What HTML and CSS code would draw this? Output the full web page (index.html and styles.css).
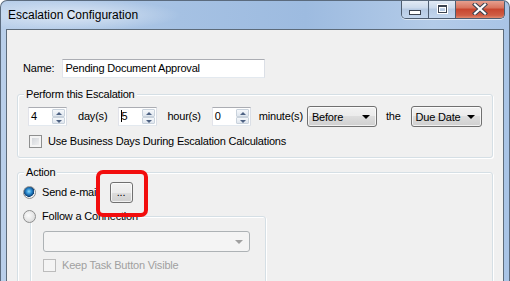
FILE: index.html
```html
<!DOCTYPE html>
<html lang="en">
<head>
    <meta charset="UTF-8">
    <title>Escalation Configuration</title>
    <link rel="stylesheet" href="styles.css">
</head>
<body>

<div class="window">
    <div class="titlebar">
        <span class="title">Escalation Configuration</span>
        <div class="caption-buttons">
            <div class="cap-btn cap-min"><span class="min-glyph"></span></div>
            <div class="cap-btn cap-max"><span class="max-glyph"></span></div>
            <div class="cap-btn cap-close">
                <svg width="16" height="12" viewBox="0 0 16 12">
                    <path d="M3 1.5 L13 10.5 M13 1.5 L3 10.5" stroke="#3b4350" stroke-width="4.2" stroke-linecap="square"/>
                    <path d="M3 1.5 L13 10.5 M13 1.5 L3 10.5" stroke="#ffffff" stroke-width="2.2" stroke-linecap="square"/>
                </svg>
            </div>
        </div>
    </div>

    <div class="client">
        <!-- Name -->
        <div class="name-row">
            <span class="label">Name:</span>
            <div class="textbox name-box">Pending Document Approval</div>
        </div>

        <!-- Timing -->
        <div class="group perform-group">
            <div class="group-title">Perform this Escalation</div>
            <div class="spin-row">
                <div class="spinbox"><span class="spin-value">4</span><div class="spin-buttons"><span class="spin-up"></span><span class="spin-down"></span></div></div>
                <span class="unit unit-day">day(s)</span>
                <div class="spinbox"><span class="spin-value"><span class="caret"></span>5</span><div class="spin-buttons"><span class="spin-up"></span><span class="spin-down"></span></div></div>
                <span class="unit unit-hour">hour(s)</span>
                <div class="spinbox"><span class="spin-value">0</span><div class="spin-buttons"><span class="spin-up"></span><span class="spin-down"></span></div></div>
                <span class="unit unit-minute">minute(s)</span>
                <div class="combo combo-before"><span>Before</span><span class="combo-arrow"></span></div>
                <span class="unit unit-the">the</span>
                <div class="combo combo-due"><span>Due Date</span><span class="combo-arrow"></span></div>
            </div>
            <div class="check-row business-row">
                <span class="checkbox"></span>
                <span class="label">Use Business Days During Escalation Calculations</span>
            </div>
        </div>

        <!-- Action -->
        <div class="group action-group">
            <div class="group-title">Action</div>
            <div class="send-row">
                <span class="radio checked"></span>
                <span class="label">Send e-mail</span>
                <div class="push-btn">...</div>
            </div>
            <div class="sub-group">
                <div class="sub-legend">
                    <span class="radio"></span>
                    <span class="label">Follow a Connection</span>
                </div>
                <div class="combo combo-disabled"><span></span><span class="combo-arrow"></span></div>
                <div class="check-row keep-row">
                    <span class="checkbox disabled"></span>
                    <span class="label disabled-text">Keep Task Button Visible</span>
                </div>
            </div>
        </div>
    </div>

    <div class="highlight"></div>
</div>

</body>
</html>
```

FILE: styles.css
```css
body {
    margin: 0;
    padding: 0;
    background-color: #ffffff;
    font-family: "Liberation Sans", Arial, sans-serif;
    font-size: 11px;
    letter-spacing: -0.2px;
    color: #000;
    overflow: hidden;
}
.window {
    position: relative;
    width: 510px;
    height: 290px;
    box-sizing: border-box;
    border: 1px solid #5b6b7e;
    border-bottom: none;
    border-radius: 7px 7px 0 0;
    background: linear-gradient(to right, #b9cfea 0%, #a5c1e3 35%, #9dbbe0 60%, #b3cbe8 85%, #a9c4e6 100%);
    overflow: hidden;
}
.titlebar {
    height: 28px;
    display: flex;
    justify-content: space-between;
    align-items: flex-start;
    background: radial-gradient(ellipse 110px 16px at 70px 14px, rgba(255, 255, 255, 0.55), rgba(255, 255, 255, 0));
}
.title {
    font-size: 12px;
    letter-spacing: 0;
    line-height: 14px;
    margin: 7px 0 0 7px;
    color: #000;
}
.caption-buttons {
    display: flex;
    height: 18px;
    margin: -1px 4px 0 0;
    border: 1px solid #4e5d70;
    border-top: none;
    border-radius: 0 0 5px 5px;
    overflow: hidden;
    box-shadow: 0 1px 0 rgba(255, 255, 255, 0.6);
}
.cap-btn {
    display: flex;
    align-items: center;
    justify-content: center;
    height: 18px;
}
.cap-min, .cap-max {
    width: 26px;
    border-right: 1px solid #4e5d70;
    background: linear-gradient(#e4ecf6 0%, #cbdaec 45%, #b6cae3 50%, #c3d6ee 100%);
}
.cap-close {
    width: 48px;
    background: linear-gradient(#e8a696 0%, #d8725c 45%, #c7452e 50%, #cf5d44 85%, #e08a6f 100%);
}
.min-glyph {
    width: 10px;
    height: 3px;
    margin-top: 6px;
    background: #ffffff;
    border: 1px solid #3b4350;
}
.max-glyph {
    width: 7px;
    height: 5px;
    margin-top: -1px;
    border: 1px solid #3b4350;
    border-top-width: 2px;
    box-shadow: 0 0 0 1px #ffffff, inset 0 0 0 1px #ffffff;
}
.client {
    margin: 0 5px;
    height: 260px;
    border: 1px solid #5d6b7a;
    border-bottom: none;
    background-color: #f0f0f0;
}
.label {
    line-height: 13px;
    white-space: nowrap;
}
.disabled-text {
    color: #a0a0a0;
}

/* name */
.name-row {
    display: flex;
    align-items: center;
    height: 19px;
    margin: 29px 0 0 16px;
}
.textbox {
    box-sizing: border-box;
    background: #fff;
    border: 1px solid;
    border-color: #abadb3 #dbdfe6 #e3e9ef #e2e3ea;
    line-height: 17px;
}
.name-box {
    width: 203px;
    height: 19px;
    margin-left: 8px;
    padding-left: 2px;
}

/* group boxes */
.group {
    width: 476px;
    box-sizing: border-box;
    margin-left: 10px;
    border: 1px solid #d5dfe5;
    border-radius: 3px;
    box-shadow: inset 1px 1px 0 #fff, 1px 1px 0 #fff;
}
.group-title {
    display: table;
    margin: -7px 0 0 6px;
    padding: 0 2px;
    line-height: 13px;
    background: #f0f0f0;
}
.perform-group {
    margin-top: 16px;
    padding-bottom: 9px;
}
.action-group {
    margin-top: 14px;
    padding-bottom: 30px;
}

/* spin row */
.spin-row {
    display: flex;
    align-items: center;
    height: 21px;
    margin: 5px 0 0 10px;
}
.spinbox {
    width: 39px;
    height: 19px;
    box-sizing: border-box;
    background: #fff;
    border: 1px solid;
    border-color: #abadb3 #dbdfe6 #e3e9ef #e2e3ea;
    display: flex;
    justify-content: space-between;
}
.spin-value {
    padding-left: 2px;
    line-height: 16px;
    position: relative;
}
.caret {
    position: absolute;
    left: 2px;
    top: 2px;
    width: 1px;
    height: 12px;
    background: #000;
}
.spin-buttons {
    display: flex;
    flex-direction: column;
    width: 13px;
    margin: 1px 1px 1px 0;
}
.spin-up, .spin-down {
    flex: 1;
    position: relative;
    border: 1px solid #c9d2dc;
    border-radius: 1px;
    background: linear-gradient(#f6f8fb, #dfe6ee);
}
.spin-up::after, .spin-down::after {
    content: "";
    position: absolute;
    left: 3px;
    border-left: 3px solid transparent;
    border-right: 3px solid transparent;
}
.spin-up::after {
    top: 2px;
    border-bottom: 3px solid #4e6283;
}
.spin-down::after {
    top: 2px;
    border-top: 3px solid #4e6283;
}
.unit {
    line-height: 13px;
    white-space: nowrap;
}
.unit-day { margin: 0 11px 0 11px; }
.unit-hour { margin: 0 11px 0 10px; }
.unit-minute { margin: 0 4px 0 8px; }
.unit-the { margin: 0 10px 0 9px; }

/* combo boxes */
.combo {
    box-sizing: border-box;
    height: 21px;
    padding: 0 6px 0 4px;
    display: flex;
    align-items: center;
    justify-content: space-between;
    border: 1px solid #707070;
    border-radius: 3px;
    background: linear-gradient(#f2f2f2 0%, #ebebeb 50%, #dddddd 50%, #cfcfcf 100%);
    box-shadow: inset 0 0 0 1px rgba(255, 255, 255, 0.7);
}
.combo-arrow {
    width: 0;
    height: 0;
    border-left: 4px solid transparent;
    border-right: 4px solid transparent;
    border-top: 4px solid #000;
}
.combo-before {
    width: 70px;
}
.combo-due {
    width: 71px;
}
.combo-disabled {
    width: 207px;
    margin: 8px 0 0 12px;
    border-color: #adb2b5;
    background: #f4f4f4;
    box-shadow: none;
}
.combo-disabled .combo-arrow {
    border-top-color: #a0a0a0;
}

/* checkboxes and radios */
.check-row {
    display: flex;
    align-items: center;
    height: 13px;
}
.business-row {
    margin: 8px 0 0 11px;
}
.keep-row {
    margin: 7px 0 0 12px;
}
.checkbox {
    width: 13px;
    height: 13px;
    box-sizing: border-box;
    margin-right: 6px;
    border: 1px solid #8e8f8f;
    background: linear-gradient(135deg, #cbcfd5, #f6f6f6);
    box-shadow: inset 0 0 0 2px #f4f4f4;
}
.checkbox.disabled {
    border-color: #bcbcbc;
    background: #f4f4f4;
    box-shadow: none;
}
.radio {
    width: 13px;
    height: 13px;
    box-sizing: border-box;
    margin-right: 6px;
    border-radius: 50%;
    border: 1px solid #8e8f8f;
    background: radial-gradient(circle at 40% 40%, #fbfbfb 0%, #e3e3e3 60%, #cfcfcf 100%);
}
.radio.checked {
    background: radial-gradient(circle at 45% 40%, #8fdcf9 0%, #2a8ad0 30%, #0d3f73 58%, #f4f4f4 62%, #e0e0e0 100%);
}
.send-row {
    display: flex;
    align-items: center;
    height: 21px;
    margin: 3px 0 0 5px;
}
.push-btn {
    width: 23px;
    height: 21px;
    box-sizing: border-box;
    margin-left: 11px;
    border: 1px solid #707070;
    border-radius: 3px;
    background: linear-gradient(#f2f2f2 0%, #ebebeb 50%, #dddddd 50%, #cfcfcf 100%);
    box-shadow: inset 0 0 0 1px rgba(255, 255, 255, 0.7);
    text-align: center;
    line-height: 18px;
}
.sub-group {
    width: 236px;
    box-sizing: border-box;
    margin: 13px 0 0 12px;
    padding-bottom: 20px;
    border: 1px solid #d5dfe5;
    border-radius: 3px;
    box-shadow: inset 1px 1px 0 #fff, 1px 1px 0 #fff;
}
.sub-legend {
    display: flex;
    align-items: center;
    height: 13px;
    margin: -7px 0 0 -8px;
    padding-right: 2px;
    width: max-content;
    background: #f0f0f0;
}

/* red callout drawn over the dialog */
.highlight {
    position: absolute;
    left: 95px;
    top: 169px;
    width: 52px;
    height: 47px;
    box-sizing: border-box;
    border: 4px solid #f20d0d;
    border-radius: 7px;
}
```
